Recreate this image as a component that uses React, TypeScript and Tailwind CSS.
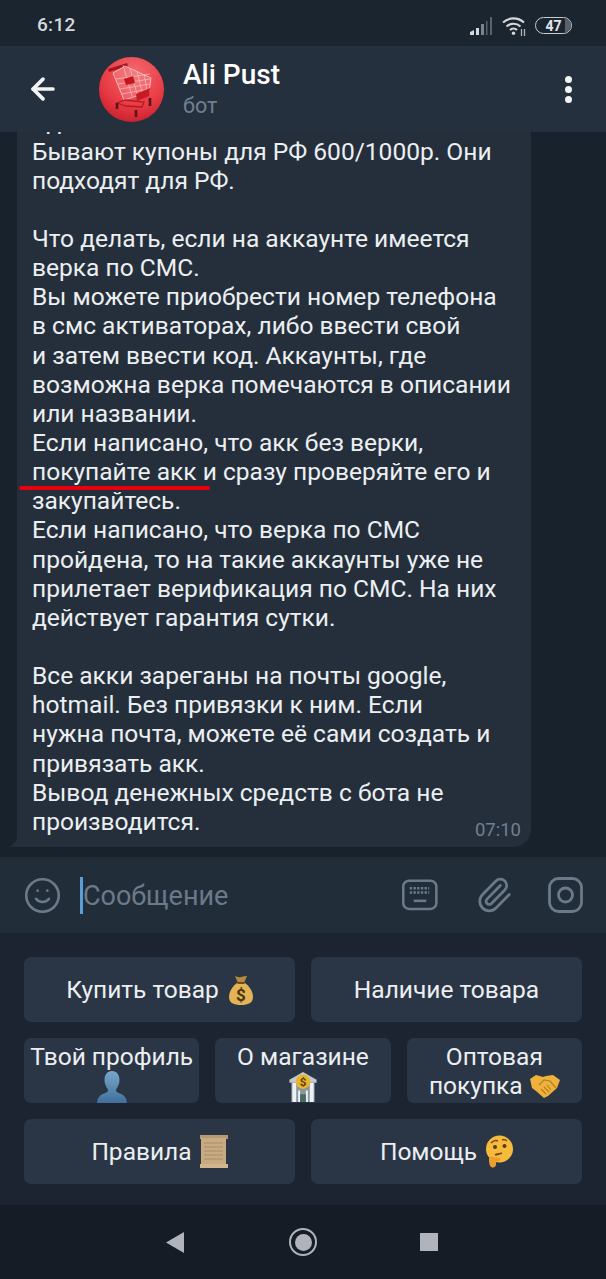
import { ArrowLeft, Paperclip, Smile } from "lucide-react";
import type { ReactNode } from "react";

const lines = [
	"Уд",
	"Бывают купоны для РФ 600/1000р. Они",
	"подходят для РФ.",
	"",
	"Что делать, если на аккаунте имеется",
	"верка по СМС.",
	"Вы можете приобрести номер телефона",
	"в смс активаторах, либо ввести свой",
	"и затем ввести код. Аккаунты, где",
	"возможна верка помечаются в описании",
	"или названии.",
	"Если написано, что акк без верки,",
	"покупайте акк и сразу проверяйте его и",
	"закупайтесь.",
	"Если написано, что верка по СМС",
	"пройдена, то на такие аккаунты уже не",
	"прилетает верификация по СМС. На них",
	"действует гарантия сутки.",
	"",
	"Все акки зареганы на почты google,",
	"hotmail. Без привязки к ним. Если",
	"нужна почта, можете её сами создать и",
	"привязать акк.",
	"Вывод денежных средств с бота не",
];

function StatusIcons() {
	return (
		<div className="flex items-center gap-[9px]">
			<svg width="24" height="20" viewBox="0 0 24 20">
				<path d="M1 19v-3l4-2v5z" fill="#d5d8dc" />
				<path d="M7 19v-7h3v7z" fill="#d5d8dc" />
				<path d="M12 19V8h3v11z" fill="#7c838b" />
				<path d="M17 19V5h1.500v14zM21 19V1h2v18z" fill="#59616b" />
			</svg>
			<svg width="24" height="20" viewBox="0 0 24 20" fill="none">
				<path d="M1 6.500C7 1 16 1 22 6.500" stroke="#d5d8dc" strokeWidth="2.200" />
				<path d="M4.500 10.500C8.500 6.800 14.500 6.800 18.500 10.500" stroke="#d5d8dc" strokeWidth="2.200" />
				<path d="M8 14c2-1.800 5-1.800 7 0" stroke="#d5d8dc" strokeWidth="2.200" />
				<circle cx="11.500" cy="17.300" r="1.700" fill="#d5d8dc" />
				<path d="M19.500 13v7M22.500 13v7" stroke="#aeb3b9" strokeWidth="1.300" />
			</svg>
			<div className="relative flex h-[17px] w-[37px] items-center justify-center overflow-hidden rounded-[9px] border-[1.5px] border-[#c8ccd1]">
				<div className="absolute inset-y-0 right-0 w-[6px] bg-[#59616b]" />
				<span className="relative text-[14px] leading-none font-bold text-[#e4e6e9]">47</span>
			</div>
		</div>
	);
}

function CartAvatar() {
	return (
		<svg width="65" height="65" viewBox="0 0 65 65" className="shrink-0">
			<defs>
				<radialGradient id="red" cx="0.55" cy="0.25" r="0.85">
					<stop offset="0" stopColor="#f46a6e" />
					<stop offset="0.6" stopColor="#e83a43" />
					<stop offset="1" stopColor="#c01a28" />
				</radialGradient>
			</defs>
			<circle cx="32.500" cy="32.500" r="32.500" fill="url(#red)" />
			<path d="M9 12l19-6 1 3-19 6z" fill="#a81420" />
			<path d="M14 16l11 27 25-8 2-14-26-12z" fill="#f6a5a7" fillOpacity=".3" stroke="#f7cfd0" strokeWidth=".8" />
			<path d="M17 22l34-5M19 27l32-5M21 32l30-5M23 37l27-5M24 8l9 31M31 11l7 26M38 14l5 21M45 17l3 16" stroke="#f7cfd0" strokeWidth=".6" />
			<path d="M25 22l9-3 2 7-9 2z" fill="#c3161f" />
			<path d="M37 37l14-6-1 8-12 5z" fill="#c71a24" />
			<path d="M18 46l8-3 19 2-2 5-16-1z" fill="none" stroke="#b51a24" strokeWidth="1.300" />
			<path d="M18 46v6M37 53v7M51 41v8" stroke="#5a141c" strokeWidth="2.600" />
		</svg>
	);
}

function KeyboardIcon() {
	return (
		<svg width="36" height="32" viewBox="0 0 37 32" fill="none">
			<rect x="1.300" y="1.300" width="34" height="29" rx="6" stroke="#6b7a89" strokeWidth="2.600" />
			<path d="M8 9h20M8 13.500h20" stroke="#6b7a89" strokeWidth="2.600" strokeDasharray="2.400 1.400" />
			<path d="M12 22h13" stroke="#6b7a89" strokeWidth="2.600" />
		</svg>
	);
}

function CameraIcon() {
	return (
		<svg width="35" height="36" viewBox="0 0 35 36" fill="none">
			<rect x="1.500" y="1.500" width="32" height="33" rx="9" stroke="#6b7a89" strokeWidth="2.800" />
			<circle cx="17.500" cy="18" r="7" stroke="#6b7a89" strokeWidth="2.800" />
		</svg>
	);
}

function MoneyBag() {
	return (
		<svg width="24" height="30" viewBox="0 0 24 30">
			<path d="M6 1c2 1 4 1.500 6 1s4-1 6-1l-3 7H9z" fill="#b98a3c" />
			<path d="M8 8h8c4 3 8 8 8 14 0 6-5 8-12 8S0 28 0 22C0 16 4 11 8 8z" fill="#e3b355" />
			<path d="M8.500 8h7" stroke="#6d4c1c" strokeWidth="2" />
			<text x="12" y="26" textAnchor="middle" fontSize="17" fontWeight="700" fontFamily="Roboto, sans-serif" fill="#4a3312">$</text>
		</svg>
	);
}

function Bust() {
	return (
		<svg width="30" height="32" viewBox="0 0 30 32">
			<defs>
				<linearGradient id="bust" x1="0" y1="0" x2="0" y2="1">
					<stop offset="0" stopColor="#7ba6c9" />
					<stop offset="1" stopColor="#3f6f9b" />
				</linearGradient>
			</defs>
			<path d="M15 0c5 0 7.500 4 7.500 9 0 4-2 7.500-3.500 9.500 0 2 1 3 4 4 4 1.500 6.500 4 7 9.500H0c.5-5.500 3-8 7-9.500 3-1 4-2 4-4C9.500 16.500 7.500 13 7.500 9 7.500 4 10 0 15 0z" fill="url(#bust)" />
		</svg>
	);
}

function Bank() {
	return (
		<svg width="30" height="33" viewBox="0 0 30 33">
			<path d="M15 1l14 8v3H1V9z" fill="#c3c9ce" />
			<path d="M3 12h24v20H3z" fill="#8b969e" />
			<path d="M4 12h4v20H4zM22 12h4v20h-4zM10 20h2v12h-2zM18 20h2v12h-2z" fill="#eef1f3" />
			<path d="M12 24h6v8h-6z" fill="#4a6b64" />
			<circle cx="15" cy="11" r="7.500" fill="#e9b52c" />
			<text x="15" y="15.500" textAnchor="middle" fontSize="12" fontWeight="700" fontFamily="Roboto, sans-serif" fill="#5a3f0a">$</text>
		</svg>
	);
}

function Handshake() {
	return (
		<svg width="30" height="24" viewBox="0 0 30 24">
			<path d="M0 5l6-4 7 2 3-1 7-1 7 5-3 8-9 8-4 2-8-7-4-3z" fill="#eeb23c" />
			<path d="M9 11l5-5 6 1 6 7M11 15l5 5M14 13l5 5M17 11l4 5" fill="none" stroke="#b97f1c" strokeWidth="1.200" />
		</svg>
	);
}

function Scroll() {
	return (
		<svg width="28" height="33" viewBox="0 0 28 33">
			<rect x="0" y="0" width="28" height="4" fill="#b89a72" />
			<rect x="1" y="3" width="25" height="26" fill="#c9ab83" />
			<path d="M4 8h19M4 12h19M4 16h19M4 20h19M4 24h19" stroke="#a98c66" strokeWidth="1" />
			<rect x="0" y="29" width="28" height="4" fill="#d4b68c" />
		</svg>
	);
}

function Thinking() {
	return (
		<svg width="28" height="33" viewBox="0 0 28 33">
			<circle cx="14.500" cy="14" r="13.500" fill="#f6bb3d" />
			<path d="M6 8c2-2 5-3 7-2M17 5c2-1 4 0 5 1" fill="none" stroke="#7a4a12" strokeWidth="1.500" />
			<circle cx="10" cy="12" r="2" fill="#5b3a10" />
			<circle cx="19.500" cy="11" r="2" fill="#5b3a10" />
			<path d="M10 20c2-1 5-1 7-2" fill="none" stroke="#7a4a12" strokeWidth="1.800" />
			<path d="M4 24c0-2 2-3 4-2l6 1c2 .500 2 2.500 0 3l-3 .500v3c0 2-2 3.500-4 3-2-1-3-3-3-8.500z" fill="#eb9f30" />
		</svg>
	);
}

function Key({
	children,
	wide,
}: {
	children: ReactNode;
	wide?: boolean;
}) {
	return (
		<div
			className={
				wide
					? "flex h-[65px] flex-1 items-center justify-center gap-[8px] overflow-hidden rounded-[7px] bg-[#2a3646] text-[24.500px] text-[#eceff1]"
					: "flex h-[65px] flex-1 flex-col items-center overflow-hidden rounded-[7px] bg-[#2a3646] pt-[4px] text-[24.500px] leading-[29px] text-[#eceff1]"
			}
		>
			{children}
		</div>
	);
}

export default function App() {
	return (
		<div
			className="relative flex h-[1279px] w-[606px] flex-col overflow-hidden bg-[#18222d]"
			style={{ fontFamily: "Roboto, 'Noto Sans', sans-serif" }}
		>
			<div className="flex h-[46px] shrink-0 items-center justify-between bg-[#1b2530] pt-[5px] pr-[34px] pl-[37px]">
				<span className="text-[19px] font-medium tracking-[0.3px] text-[#d5d8dc]">6:12</span>
				<StatusIcons />
			</div>

			<div className="flex h-[86px] shrink-0 items-center bg-[#25303e] pr-[34px] pl-[26px]">
				<ArrowLeft size={34} strokeWidth={2.6} className="text-[#f2f4f5]" />
				<div className="ml-[39px]">
					<CartAvatar />
				</div>
				<div className="ml-[19px] flex flex-1 flex-col">
					<span className="text-[28px] leading-[34px] font-medium text-white">Ali Pust</span>
					<span className="text-[21.500px] leading-[28px] text-[#6f8090]">бот</span>
				</div>
				<div className="flex flex-col gap-[3px]">
					<span className="size-[7px] rounded-full bg-[#f2f4f5]" />
					<span className="size-[7px] rounded-full bg-[#f2f4f5]" />
					<span className="size-[7px] rounded-full bg-[#f2f4f5]" />
				</div>
			</div>

			<div className="flex min-h-0 flex-1 flex-col justify-end overflow-hidden pb-[10px] pl-[17px]">
				<div className="relative w-[514px] shrink-0 rounded-[18px] rounded-bl-none bg-[#252f3c] pt-[2px] pr-[10px] pb-[11px] pl-[15px] text-[24.550px] leading-[29.150px] text-[#eceff1]">
					{lines.map((line, i) => (
						<div key={i} className="h-[29.150px] whitespace-nowrap">
							{line}
						</div>
					))}
					<div className="flex h-[29.150px] items-end justify-between">
						<span>производится.</span>
						<span className="-mb-[5px] text-[18.500px] leading-[22px] text-[#6f8090]">07:10</span>
					</div>
					<svg width="10" height="14" viewBox="0 0 10 14" className="absolute bottom-0 -left-[8px]">
						<path d="M10 0v14H0c4-2 8-6 10-14z" fill="#252f3c" />
					</svg>
				</div>
			</div>

			<div className="flex h-[76px] shrink-0 items-center bg-[#222d3a] pr-[23px] pl-[23px]">
				<Smile size={39} strokeWidth={1.6} className="text-[#6b7a89]" />
				<span className="ml-[18px] h-[37px] w-[3px] bg-[#5a9fd6]" />
				<span className="pt-[2px] text-[27px] text-[#6b7a89]">Сообщение</span>
				<div className="ml-auto flex items-center">
					<KeyboardIcon />
					<Paperclip size={38} strokeWidth={1.7} className="ml-[37px] text-[#6b7a89]" />
					<div className="ml-[35px]">
						<CameraIcon />
					</div>
				</div>
			</div>

			<div className="flex h-[272px] shrink-0 flex-col gap-[16px] bg-[#1b2430] px-[24px] pt-[24px]">
				<div className="flex gap-[16px]">
					<Key wide>
						<span className="pt-[2px]">Купить товар</span>
						<span className="ml-[2px]">
							<MoneyBag />
						</span>
					</Key>
					<Key wide>
						<span className="pt-[2px]">Наличие товара</span>
					</Key>
				</div>
				<div className="flex gap-[16px]">
					<Key>
						Твой профиль
						<Bust />
					</Key>
					<Key>
						О магазине
						<Bank />
					</Key>
					<Key>
						Оптовая
						<span className="flex items-center gap-[7px]">
							покупка <Handshake />
						</span>
					</Key>
				</div>
				<div className="flex gap-[16px]">
					<Key wide>
						<span className="pt-[2px]">Правила</span>
						<Scroll />
					</Key>
					<Key wide>
						<span className="pt-[2px]">Помощь</span>
						<Thinking />
					</Key>
				</div>
			</div>

			<div className="flex h-[74px] shrink-0 items-center bg-[#151c25] pl-[166px]">
				<svg width="18" height="21" viewBox="0 0 18 21">
					<path d="M18 0v21L0 10.500z" fill="#b0b4ba" />
				</svg>
				<span className="ml-[105px] flex size-[28px] items-center justify-center rounded-full border-[2.500px] border-[#b0b4ba]">
					<span className="size-[17px] rounded-full bg-[#b0b4ba]" />
				</span>
				<span className="ml-[103px] size-[18px] bg-[#b0b4ba]" />
			</div>

			<div className="absolute top-[486px] left-[19px] h-[4px] w-[191px] rounded-full bg-[#e8000f]" />
		</div>
	);
}
